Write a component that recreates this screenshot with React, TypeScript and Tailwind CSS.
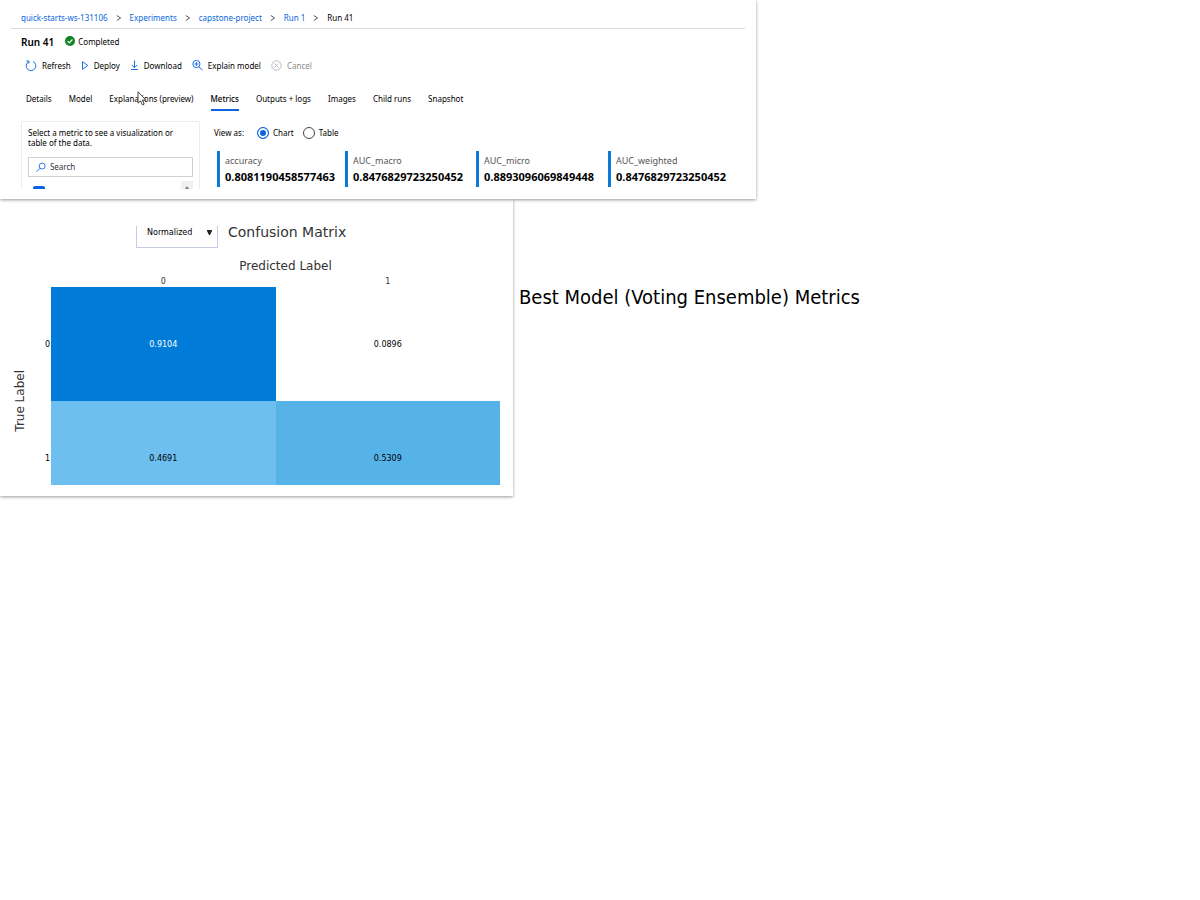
import type { ReactNode } from "react";

const crumbs = ["quick-starts-ws-131106", "Experiments", "capstone-project", "Run 1"];
const tabs = [
  "Details",
  "Model",
  "Explanations (preview)",
  "Metrics",
  "Outputs + logs",
  "Images",
  "Child runs",
  "Snapshot",
];
const metrics = [
  { name: "accuracy", value: "0.8081190458577463" },
  { name: "AUC_macro", value: "0.8476829723250452" },
  { name: "AUC_micro", value: "0.8893096069849448" },
  { name: "AUC_weighted", value: "0.8476829723250452" },
];

function Chevron() {
  return (
    <svg width="6" height="8" viewBox="0 0 6 8" fill="none" stroke="#555" aria-hidden="true">
      <path d="M.8 1.5 4.6 4 .8 6.5" />
    </svg>
  );
}

function RefreshIcon() {
  return (
    <svg width="12" height="12" viewBox="0 0 12 12" fill="none" stroke="#1b6fe0" aria-hidden="true">
      <path d="M3.6 1.7A4.8 4.8 0 1 0 8 1.5M1.3 1h2.6v2.6" />
    </svg>
  );
}

function DeployIcon() {
  return (
    <svg width="8" height="12" viewBox="0 0 8 12" fill="none" stroke="#1b6fe0" aria-hidden="true">
      <path d="M1.5 1.7v7.6L6.8 5.5z" />
    </svg>
  );
}

function DownloadIcon() {
  return (
    <svg width="9" height="12" viewBox="0 0 9 12" fill="none" stroke="#1b6fe0" aria-hidden="true">
      <path d="M4.5 .5v7M1.7 4.9l2.8 2.8 2.8-2.8M1 9.5h7" />
    </svg>
  );
}

function ExplainIcon() {
  return (
    <svg width="11" height="12" viewBox="0 0 11 12" fill="none" stroke="#1b6fe0" aria-hidden="true">
      <circle cx="4.4" cy="4" r="3.6" />
      <path d="M7 6.8l3.6 3.6M2.4 4h4M4.4 2v4" />
    </svg>
  );
}

function CancelIcon() {
  return (
    <svg width="11" height="12" viewBox="0 0 11 12" fill="none" stroke="#bdbdbd" aria-hidden="true">
      <circle cx="5.5" cy="5.5" r="4.7" />
      <path d="M3.4 3.4l4.2 4.2M7.6 3.4L3.4 7.6" />
    </svg>
  );
}

function Tool({ icon, label, disabled }: { icon: ReactNode; label: string; disabled?: boolean }) {
  return (
    <button type="button" disabled={disabled} className="flex items-center gap-[5px] disabled:text-[#8a8a8a]">
      {icon}
      {label}
    </button>
  );
}

function ViewOption({ label, checked }: { label: string; checked?: boolean }) {
  return (
    <label className="flex items-center gap-1">
      <input
        type="radio"
        name="view"
        defaultChecked={checked}
        className="size-3 appearance-none rounded-full border border-[#444] checked:border-[#0a63e0] checked:bg-[#0a63e0] checked:shadow-[inset_0_0_0_2px_white]"
      />
      {label}
    </label>
  );
}

function RunPanel() {
  return (
    <section className="relative z-10 h-[199px] w-full max-w-[756px] overflow-hidden bg-white text-[8px] leading-3 text-black shadow-[0_1px_3px_rgba(0,0,0,0.4)]">
      <nav aria-label="Breadcrumb" className="mx-[11px] flex h-[29px] items-center gap-2 border-b border-[#dcdcdc] px-[10px] pt-2">
        {crumbs.map((crumb) => (
          <span key={crumb} className="flex items-center gap-2">
            <a href="#" className="text-[#0868dc]">
              {crumb}
            </a>
            <Chevron />
          </span>
        ))}
        <span>Run 41</span>
      </nav>

      <header className="flex h-[25px] items-center px-[21px]">
        <h1 className="text-[10px] font-semibold">Run 41</h1>
        <svg className="ml-[11px] mr-[3px]" width="10" height="12" viewBox="0 0 10 12" aria-hidden="true">
          <circle cx="5" cy="5" r="5" fill="#0f8420" />
          <path d="M2.6 5.1l1.7 1.7 3.1-3.3" fill="none" stroke="#fff" strokeWidth="1.2" />
        </svg>
        <span>Completed</span>
      </header>

      <div className="flex h-6 items-center gap-2.5 px-[25px]">
        <Tool icon={<RefreshIcon />} label="Refresh" />
        <Tool icon={<DeployIcon />} label="Deploy" />
        <Tool icon={<DownloadIcon />} label="Download" />
        <Tool icon={<ExplainIcon />} label="Explain model" />
        <Tool icon={<CancelIcon />} label="Cancel" disabled />
      </div>

      <div role="tablist" className="mt-2 flex h-[25px] gap-[17px] px-[26px]">
        {tabs.map((tab) => (
          <button
            key={tab}
            type="button"
            role="tab"
            aria-selected={tab === "Metrics"}
            className="border-b-2 border-transparent pt-0.5 aria-selected:border-[#0a63e0] aria-selected:font-medium"
          >
            {tab}
          </button>
        ))}
      </div>

      <div className="mt-2.5 flex h-[68px] gap-3.5 px-[21px]">
        <aside className="w-[179px] shrink-0 overflow-hidden border border-b-0 border-[#ececec] px-1.5 pt-1.5">
          <p className="leading-[10px]">Select a metric to see a visualization or table of the data.</p>
          <label className="mt-[9px] flex h-5 items-center gap-1 border border-[#d0d0d0] px-[7px]">
            <svg width="11" height="11" viewBox="0 0 11 11" fill="none" stroke="#1b6fe0" aria-hidden="true">
              <circle cx="6.8" cy="3.9" r="3.3" />
              <path d="M4.5 6.3L.5 10.3" />
            </svg>
            <input type="text" aria-label="Search" placeholder="Search" className="w-full outline-none placeholder:text-[#333]" />
          </label>
          <div className="mt-1 flex items-start justify-between pl-[5px]">
            <input
              type="checkbox"
              defaultChecked
              aria-label="Metric"
              className="mt-[5px] size-3 appearance-none rounded-xs bg-[#0a63e0]"
            />
            <span className="flex h-4 w-3 justify-center bg-[#f3f0f3] pt-[5px]">
              <svg width="6" height="4" viewBox="0 0 6 4" aria-hidden="true">
                <path d="M3 0l3 4H0z" fill="#888" />
              </svg>
            </span>
          </div>
        </aside>

        <div className="min-w-0">
          <fieldset className="flex h-6 items-center gap-[9px]">
            <span className="mr-1">View as:</span>
            <ViewOption label="Chart" checked />
            <ViewOption label="Table" />
          </fieldset>
          <dl className="ml-[3px] mt-1.5 grid grid-cols-[128px_131px_132px_auto]">
            {metrics.map((metric) => (
              <div key={metric.name} className="h-9 border-l-3 border-[#0b7ad6] pl-[5px] pt-0.5">
                <dt className="text-[9px] leading-4 text-[#555]">{metric.name}</dt>
                <dd className="text-[11px] font-bold leading-4">{metric.value}</dd>
              </div>
            ))}
          </dl>
        </div>
      </div>

      <svg className="absolute left-[137px] top-[91px]" width="10" height="15" viewBox="0 0 10 15" aria-hidden="true">
        <path d="M1 .8v11.4l2.6-2.3 1.8 4 1.8-.8-1.8-4h3.6z" fill="#fff" stroke="#444" />
      </svg>
    </section>
  );
}

function ConfusionPanel() {
  return (
    <section className="h-[297px] w-full max-w-[513px] shrink-0 overflow-hidden bg-white font-['DejaVu_Sans',sans-serif] text-[8px] text-black shadow-[0_1px_3px_rgba(0,0,0,0.4)]">
      <div className="mt-[27px] flex h-[22px] items-start gap-2.5 pl-[136px]">
        <div className="relative h-[22px] w-[82px] overflow-hidden border border-t-0 border-[#c5cce6]">
          <select aria-label="Matrix values" className="h-3.5 w-full appearance-none pl-2.5 leading-[14px] outline-none">
            <option>Normalized</option>
          </select>
          <svg className="absolute right-[5px] top-1" width="5" height="5" viewBox="0 0 5 5" aria-hidden="true">
            <path d="M0 0h5v1L3 5H2L0 1z" fill="#222" />
          </svg>
        </div>
        <h2 className="text-[14px] leading-3 text-[#333]">Confusion Matrix</h2>
      </div>
      <div className="flex h-[237px] overflow-hidden">
        <div className="flex w-10 shrink-0 items-center justify-center pt-[68px]">
          <span className="rotate-180 text-[12px] leading-3 text-[#333] [writing-mode:vertical-rl]">True Label</span>
        </div>
        <table className="w-[460px] table-fixed border-collapse self-start text-center">
          <caption className="h-7 pl-[31px] pt-3 text-[12px] leading-3 text-[#333]">Predicted Label</caption>
          <colgroup>
            <col className="w-[11px]" />
            <col />
            <col />
          </colgroup>
          <thead>
            <tr className="h-[11px] leading-[11px] text-[#333]">
              <td />
              <th scope="col" className="font-normal">0</th>
              <th scope="col" className="font-normal">1</th>
            </tr>
          </thead>
          <tbody>
            <tr className="h-[114px]">
              <th scope="row" className="pr-px pt-0.5 text-right font-normal">0</th>
              <td className="bg-[#007cd8] pt-0.5 text-white">0.9104</td>
              <td className="pt-0.5">0.0896</td>
            </tr>
            <tr className="h-[114px]">
              <th scope="row" className="pr-px pt-0.5 text-right font-normal">1</th>
              <td className="bg-[#6cbfef] pt-0.5">0.4691</td>
              <td className="bg-[#55b3e8] pt-0.5">0.5309</td>
            </tr>
          </tbody>
        </table>
      </div>
    </section>
  );
}

export default function App() {
  return (
    <main className="min-h-screen bg-white font-['Noto_Sans',sans-serif]">
      <RunPanel />
      <div className="flex items-start gap-1.5">
        <ConfusionPanel />
        <h2 className="mt-20 whitespace-nowrap font-['DejaVu_Sans_Condensed','DejaVu_Sans',sans-serif] text-[20px] leading-9 text-black">
          Best Model (Voting Ensemble) Metrics
        </h2>
      </div>
    </main>
  );
}
